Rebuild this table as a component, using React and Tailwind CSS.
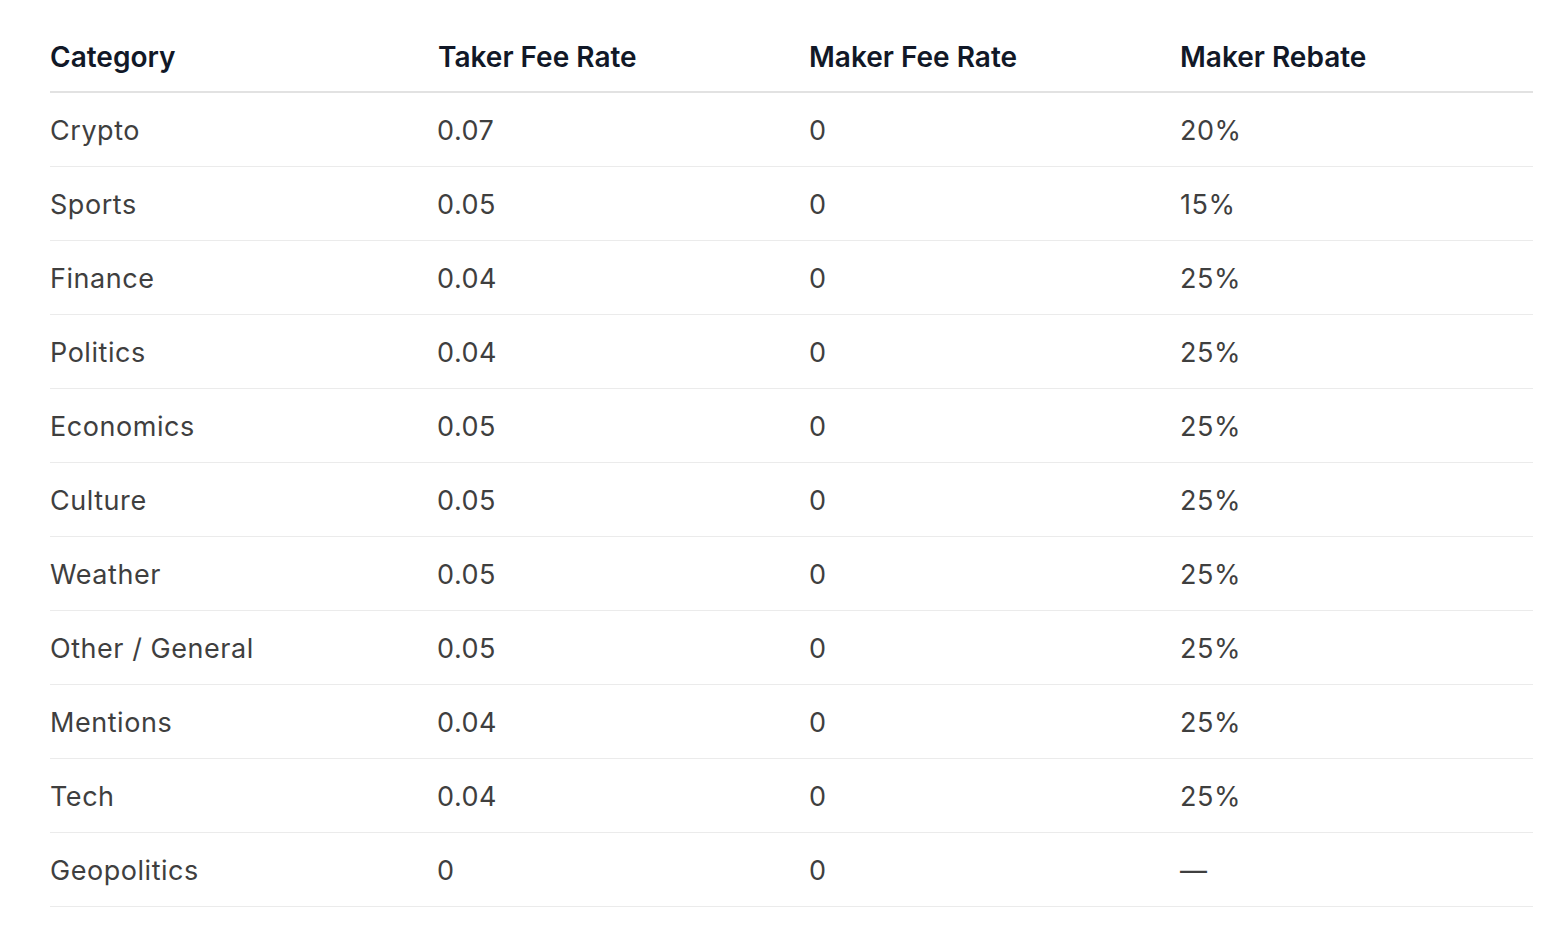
const rows = [
  ["Crypto", "0.07", "0", "20%"],
  ["Sports", "0.05", "0", "15%"],
  ["Finance", "0.04", "0", "25%"],
  ["Politics", "0.04", "0", "25%"],
  ["Economics", "0.05", "0", "25%"],
  ["Culture", "0.05", "0", "25%"],
  ["Weather", "0.05", "0", "25%"],
  ["Other / General", "0.05", "0", "25%"],
  ["Mentions", "0.04", "0", "25%"],
  ["Tech", "0.04", "0", "25%"],
  ["Geopolitics", "0", "0", "—"],
];

export default function App() {
  return (
    <div className="min-h-[928px] w-[1548px] bg-white pl-[50px] pt-[19px]" style={{ fontFamily: "Inter, 'Noto Sans', sans-serif" }}>
      <div className="w-[1483px]">
        <div className="grid grid-cols-[388px_371px_371px_353px] h-[74px] pt-[4px] items-center border-b-2 border-[#e2e2e2] text-[28px] font-semibold text-[#111827]">
          <div>Category</div>
          <div>Taker Fee Rate</div>
          <div>Maker Fee Rate</div>
          <div>Maker Rebate</div>
        </div>
        {rows.map((r, i) => (
          <div key={i} className="grid grid-cols-[388px_371px_371px_353px] h-[74px] pt-[4px] items-center border-b border-[#ebebeb] text-[27px] text-[#3f3f3f] tracking-[0.02em]">
            <div>{r[0]}</div>
            <div className="-ml-px">{r[1]}</div>
            <div>{r[2]}</div>
            <div>{r[3]}</div>
          </div>
        ))}
      </div>
    </div>
  );
}
